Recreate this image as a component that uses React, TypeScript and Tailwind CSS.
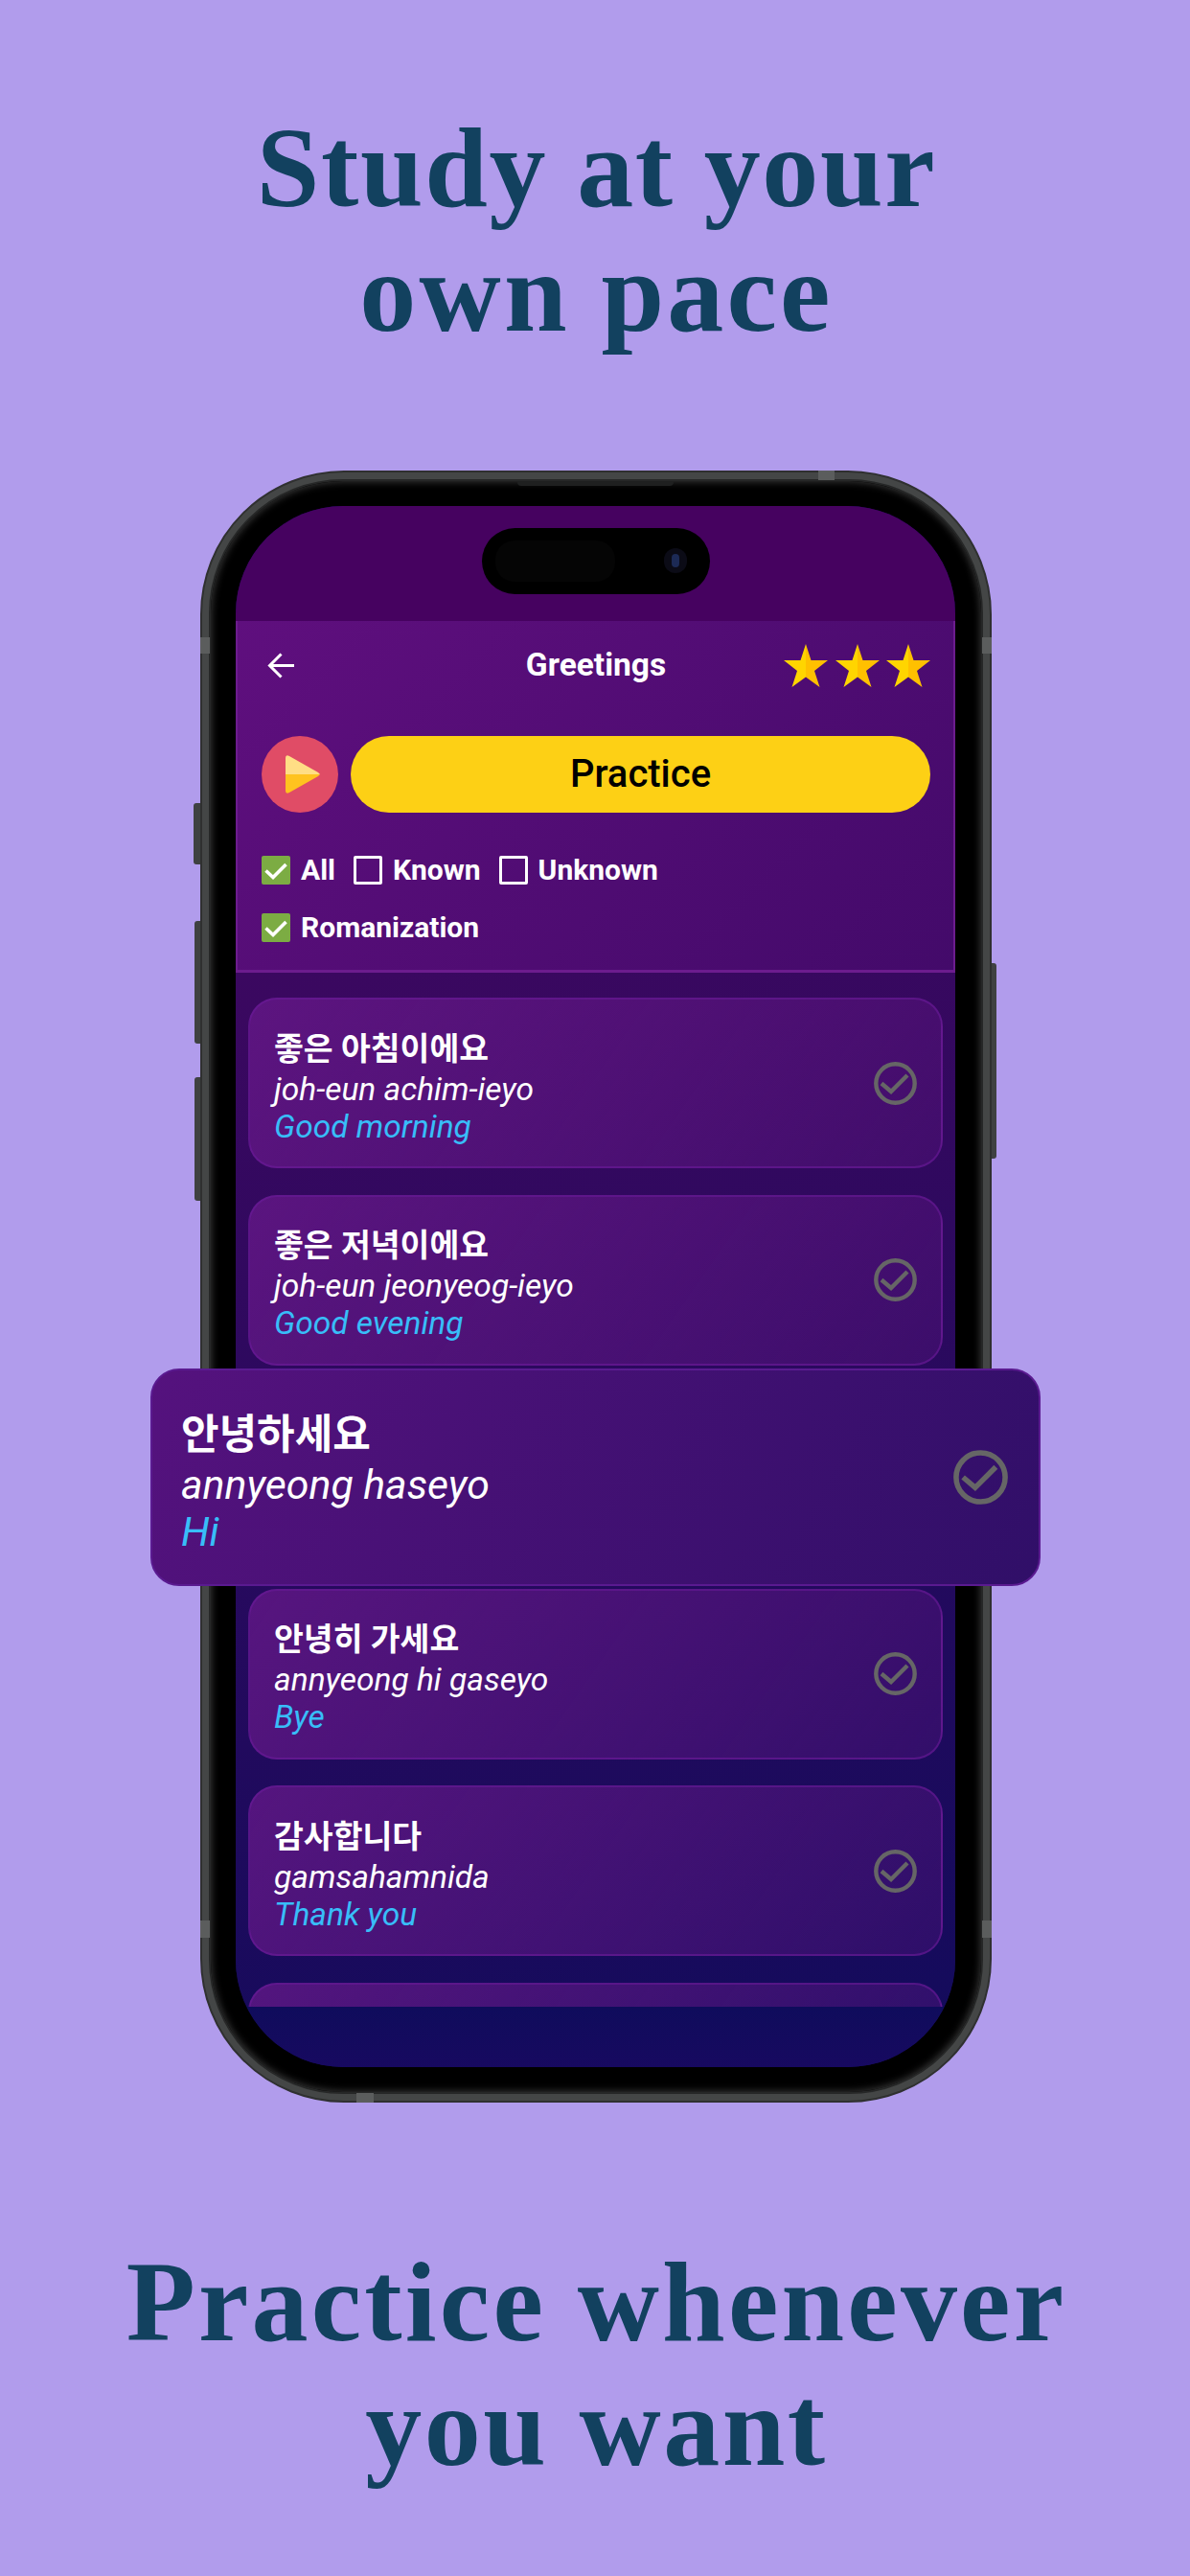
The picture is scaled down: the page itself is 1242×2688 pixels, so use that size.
import React from "react";

const cards = [
  { ko: "좋은 아침이에요", ro: "joh-eun achim-ieyo", en: "Good morning" },
  { ko: "좋은 저녁이에요", ro: "joh-eun jeonyeog-ieyo", en: "Good evening" },
  null,
  { ko: "안녕히 가세요", ro: "annyeong hi gaseyo", en: "Bye" },
  { ko: "감사합니다", ro: "gamsahamnida", en: "Thank you" },
];

function CheckCircle({ className }: { className: string }) {
  return (
    <svg viewBox="0 0 45 45" className={className} fill="none" stroke="#666666">
      <circle cx="22.5" cy="22.5" r="20.2" strokeWidth="4.4" />
      <path d="M8 22.5 L18 31 L35 14" strokeWidth="4.4" />
    </svg>
  );
}

function Star() {
  return (
    <svg viewBox="0 0 46 45" className="w-[46px] h-[45px]">
      <polygon points="23,0 23,34.5 8.5,45 14,28 0,17 17.5,17" fill="#ffd500" />
      <polygon points="23,0 23,34.5 37.5,45 32,28 46,17 28.5,17" fill="#ffc000" />
    </svg>
  );
}

function Box({ checked }: { checked: boolean }) {
  if (checked) {
    return (
      <span className="w-[30px] h-[30px] rounded-[2px] bg-[#7cac43] flex items-center justify-center shrink-0">
        <svg viewBox="0 0 30 30" className="w-[30px] h-[30px]" fill="none" stroke="#ffffff" strokeWidth="3.6">
          <path d="M4.5 15.5 L12 22.5 L25.5 9" />
        </svg>
      </span>
    );
  }
  return <span className="w-[30px] h-[30px] border-[3px] border-white rounded-[2px] shrink-0" />;
}

function Option({ label, checked }: { label: string; checked: boolean }) {
  return (
    <div className="flex items-center gap-[11px] h-[30px]">
      <Box checked={checked} />
      <span className="text-[30px] leading-[30px] font-bold text-white">{label}</span>
    </div>
  );
}

function Card({ ko, ro, en }: { ko: string; ro: string; en: string }) {
  return (
    <div className="h-[178px] shrink-0 rounded-[30px] border-2 border-[#6a1b9a99] bg-[linear-gradient(125deg,#6a1a8cb8,#6a1a8c48)] pl-[25px] pr-[25px] flex justify-between items-center">
      <div className="flex flex-col mt-[7px]">
        <span className="text-[33.5px] leading-[44px] font-bold text-white">{ko}</span>
        <span className="text-[33.5px] leading-[39px] italic font-normal text-white">{ro}</span>
        <span className="text-[33.5px] leading-[39px] italic font-normal text-[#38bdf8]">{en}</span>
      </div>
      <CheckCircle className="w-[45px] h-[45px] shrink-0" />
    </div>
  );
}

function Phone() {
  return (
    <div className="relative w-[826px] h-[1703px] ml-[209px] mt-[120px] shrink-0">
      {/* side buttons */}
      <div className="absolute -left-[7px] top-[347px] w-[9px] h-[64px] rounded-l-[3px] bg-[#3f4141]" />
      <div className="absolute -left-[6px] top-[470px] w-[8px] h-[128px] rounded-l-[3px] bg-[#3f4141]" />
      <div className="absolute -left-[6px] top-[633px] w-[8px] h-[129px] rounded-l-[3px] bg-[#3f4141]" />
      <div className="absolute -right-[5px] top-[514px] w-[7px] h-[204px] rounded-r-[3px] bg-[#3f4141]" />

      {/* body */}
      <div className="relative w-full h-full rounded-[150px] bg-[#444646] border-2 border-[#2f3030] p-[7px]">
        <div className="w-full h-full rounded-[140px] bg-[#000000] border-2 border-[#262727] p-[26px] shadow-[inset_0_0_8px_#444444]">
          <div className="w-[751px] h-[1629px] rounded-[112px] overflow-hidden flex flex-col bg-[#130b5c] font-['Roboto','Noto_Sans_CJK_KR',sans-serif]">
            {/* status area */}
            <div className="h-[120px] shrink-0 bg-[#460260] relative">
              <div className="absolute left-[257px] top-[23px] w-[238px] h-[69px] rounded-[35px] bg-black">
                <div className="absolute left-[14px] top-[13px] w-[125px] h-[43px] rounded-[20px] bg-[#050505]" />
                <div className="absolute left-[190px] top-[21px] w-[24px] h-[26px] rounded-full bg-[#0b0b16] flex items-center justify-center">
                  <div className="w-[8px] h-[14px] rounded-full bg-[#1c2a55]" />
                </div>
              </div>
            </div>

            {/* header panel */}
            <div className="h-[367px] shrink-0 border-x-2 border-b-[3px] border-[#6c1c8e] bg-[linear-gradient(135deg,#5f0f7e,#430a6a)] text-white pl-[25px] pr-[24px] pt-[23px]">
              <div className="grid grid-cols-[1fr_auto_1fr] items-center h-[46px]">
                <svg viewBox="0 0 28 27" className="w-[28px] h-[27px] ml-[6px]" fill="none" stroke="#ffffff" strokeWidth="3">
                  <path d="M14.5 1.5 L2.5 13.5 L14.5 25.5 M2.5 13.5 L28 13.5" />
                </svg>
                <span className="text-[33.5px] leading-[46px] font-bold">Greetings</span>
                <div className="flex justify-end gap-[7.5px]">
                  <Star />
                  <Star />
                  <Star />
                </div>
              </div>

              <div className="flex items-center gap-[13px] mt-[51px]">
                <div className="w-[80px] h-[80px] rounded-full bg-[#e04c66] flex items-center justify-center shrink-0">
                  <svg viewBox="0 0 36 40" className="w-[36px] h-[40px] ml-[6px]">
                    <path d="M0 3 Q0 -1 4 1 L34 18 Q36 20 36 20 L0 20 Z" fill="#ffde85" />
                    <path d="M0 37 Q0 41 4 39 L34 22 Q36 20 36 20 L0 20 Z" fill="#ffc31f" />
                  </svg>
                </div>
                <div className="flex-1 h-[80px] rounded-[40px] bg-[#fdd015] flex items-center justify-center text-black text-[40px] font-medium">
                  Practice
                </div>
              </div>

              <div className="flex gap-[19px] mt-[45px]">
                <Option label="All" checked />
                <Option label="Known" checked={false} />
                <Option label="Unknown" checked={false} />
              </div>
              <div className="flex mt-[30px]">
                <Option label="Romanization" checked />
              </div>
            </div>

            {/* list */}
            <div className="flex-1 min-h-0 overflow-hidden bg-[linear-gradient(170deg,#3b0860,#140b5c)] px-[13px] pt-[26px] flex flex-col gap-[27.5px]">
              {cards.map((c, i) =>
                c ? (
                  <Card key={i} ko={c.ko} ro={c.ro} en={c.en} />
                ) : (
                  <div key={i} className="h-[178px] shrink-0" />
                )
              )}
              <div className="h-[178px] shrink-0 rounded-[30px] border-2 border-[#6a1b9a99] bg-[linear-gradient(125deg,#6a1a8cb8,#6a1a8c48)]" />
            </div>

            {/* bottom bar */}
            <div className="h-[63px] shrink-0 bg-linear-to-b from-[#0f0c5c] to-[#170960]" />
          </div>
        </div>
      </div>

      {/* antenna bands */}
      <div className="absolute left-[645px] top-0 w-[17px] h-[10px] bg-[#5b5d5d]" />
      <div className="absolute left-0 top-[174px] w-[10px] h-[17px] bg-[#5b5d5d]" />
      <div className="absolute right-0 top-[174px] w-[10px] h-[17px] bg-[#5b5d5d]" />
      <div className="absolute left-0 top-[1513px] w-[10px] h-[18px] bg-[#5b5d5d]" />
      <div className="absolute right-0 top-[1513px] w-[10px] h-[18px] bg-[#5b5d5d]" />
      <div className="absolute left-[163px] bottom-0 w-[18px] h-[10px] bg-[#5b5d5d]" />
      <div className="absolute left-[331px] top-[11px] w-[163px] h-[5px] rounded-b-[4px] bg-[#1f2020]" />

      {/* highlighted card */}
      <div className="absolute -left-[52px] top-[937px] w-[929px] h-[227px] rounded-[30px] border-2 border-[#5a1a90] bg-[linear-gradient(120deg,#55127e,#300f68)] pl-[30px] pr-[32px] flex items-center justify-between font-['Roboto','Noto_Sans_CJK_KR',sans-serif]">
        <div className="flex flex-col mt-[8px]">
          <span className="text-[43px] leading-[56px] font-bold text-white">안녕하세요</span>
          <span className="text-[42.8px] leading-[49px] italic font-normal text-white">annyeong haseyo</span>
          <span className="text-[42.8px] leading-[49px] italic font-normal text-[#38bdf8]">Hi</span>
        </div>
        <CheckCircle className="w-[57px] h-[57px] shrink-0" />
      </div>
    </div>
  );
}

export default function App() {
  return (
    <div className="w-[1242px] h-[2688px] overflow-hidden bg-[#b19cec] flex flex-col text-[#12415f] font-['Liberation_Serif',serif] font-bold">
      <h1 className="pt-[111px] pl-[3px] text-center text-[118px] leading-[130px]">
        <span className="block tracking-[1.6px]">Study at your</span>
        <span className="block tracking-[3.2px]">own pace</span>
      </h1>
      <Phone />
      <h2 className="mt-[144px] pl-[3px] text-center text-[118px] leading-[130px]">
        <span className="block tracking-[3.2px]">Practice whenever</span>
        <span className="block tracking-[2.5px]">you want</span>
      </h2>
    </div>
  );
}
